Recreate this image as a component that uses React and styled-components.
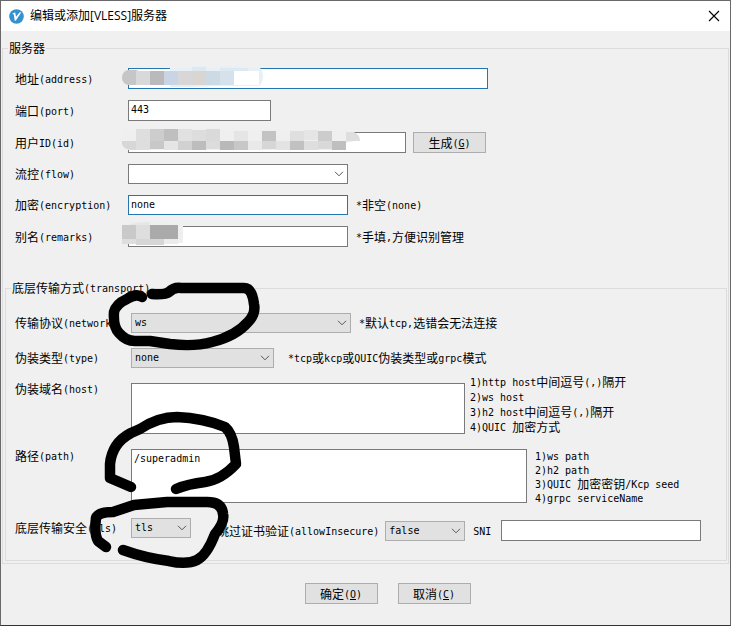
import React from "react";
import styled, { createGlobalStyle } from "styled-components";

const GlobalStyle = createGlobalStyle`
  *, *::before, *::after { box-sizing: border-box; }
  body { margin: 0; background: #f0f0f0; }
`;

const CJK = `"Noto Sans CJK SC", sans-serif`;
const MONO = `"DejaVu Sans Mono", "Noto Sans CJK SC", monospace`;

const Window = styled.main`
  position: relative;
  display: flex;
  flex-direction: column;
  min-height: 100vh;
  border: 1px solid #6a686a;
  border-bottom-color: #333;
  background: #f0f0f0;
  color: #000;
  font: 12px/14px ${CJK};
`;

const TitleBar = styled.header`
  display: flex;
  align-items: center;
  gap: 6px;
  height: 30px;
  padding: 0 8px;
  background: #fff;
`;

const Title = styled.h1`
  flex: 1;
  margin: 0;
  font: 12px/16px "Open Sans", ${CJK};
`;

const CloseButton = styled.button`
  display: flex;
  padding: 2px;
  border: 0;
  background: none;
`;

const Group = styled.fieldset`
  min-width: 0;
  margin: 9px 1px 0;
  padding: 12px 0 2px;
  border: 1px solid #dcdcdc;
`;

const TransportGroup = styled(Group)`
  margin: 33px 1px 0 2px;
  padding: 17px 25px 19px 9px;
`;

const Legend = styled.legend`
  margin-left: 5px;
  padding: 0 1px;
  line-height: 16px;
`;

const TransportLegend = styled(Legend)`
  margin-left: -4px;
`;

const Rows = styled.div`
  display: grid;
  gap: 11px;
  padding-left: 12px;
`;

const Row = styled.div`
  display: flex;
  align-items: ${(p) => p.$align || "center"};
  margin-top: ${(p) => p.$before || 0}px;
`;

const Label = styled.label`
  flex: none;
  width: ${(p) => (p.$wide ? 116 : 113)}px;
  padding-top: ${(p) => p.$drop || 0}px;
  white-space: nowrap;
`;

const InlineLabel = styled.label`
  flex: none;
  white-space: nowrap;
`;

const Latin = styled.span`
  font-family: ${MONO};
  font-size: 10px;
  line-height: 0;
  vertical-align: 1px;
  white-space: pre;
`;

const TextBox = styled.input`
  flex: ${(p) => (p.$width ? `0 1 ${p.$width}px` : "1")};
  min-width: 0;
  height: ${(p) => (p.$short ? 20 : 21)}px;
  padding: 0 2px 2px;
  border: 1px solid ${(p) => (p.$accent ? "#2475b0" : "#7a7a7a")};
  border-radius: 0;
  outline: 0;
  background: #fff;
  color: #000;
  font: 10px/14px ${MONO};
`;

const TextArea = styled.textarea`
  flex: 1;
  min-width: 0;
  height: ${(p) => p.$height}px;
  margin-top: ${(p) => p.$drop || 0}px;
  padding: 2px;
  border: 1px solid #7a7a7a;
  border-radius: 0;
  outline: 0;
  resize: none;
  background: #fff;
  color: #000;
  font: 10px/14px ${MONO};
`;

const SelectFrame = styled.span`
  display: grid;
  flex: 0 1 ${(p) => p.$width}px;
  align-items: center;
  height: 20px;
  > * { grid-area: 1 / 1; }
  > svg { justify-self: end; margin-right: 4px; pointer-events: none; }
`;

const SelectInput = styled.select`
  appearance: none;
  width: 100%;
  height: 20px;
  padding: 0 20px 0 3px;
  border: 1px solid ${(p) => (p.$light ? "#7a7a7a" : "#adadad")};
  border-radius: 0;
  outline: 0;
  background: ${(p) => (p.$light ? "#fff" : "#e1e1e1")};
  color: #000;
  font: 10px/14px ${MONO};
`;

const Hint = styled.span`
  margin-left: ${(p) => p.$gap || 8}px;
  white-space: nowrap;
`;

const Notes = styled.ol`
  flex: none;
  width: ${(p) => p.$width}px;
  margin: 0;
  padding: 0 0 0 ${(p) => p.$gap}px;
  list-style: none;
  line-height: ${(p) => p.$line}px;
  white-space: nowrap;
`;

const SecurityOptions = styled.div`
  display: flex;
  flex: 1;
  align-items: center;
  min-width: 0;
  margin-left: 26px;
  padding-top: 2px;
`;

const InsecureLabel = styled(InlineLabel)`
  margin-right: 6px;
`;

const SniLabel = styled(InlineLabel)`
  margin: 0 10px 0 8px;
`;

const PushButton = styled.button`
  width: 73px;
  height: 21px;
  padding: 0;
  border: 1px solid #adadad;
  border-radius: 0;
  background: #e1e1e1;
  color: #000;
  font: 12px/14px ${CJK};
`;

const GenerateButton = styled(PushButton)`
  margin-left: 7px;
`;

const Footer = styled.footer`
  display: flex;
  justify-content: center;
  gap: 20px;
  padding: 19px 0 20px 44px;
`;

const Markup = styled.svg`
  position: absolute;
  top: -1px;
  left: -1px;
  pointer-events: none;
`;

/* Half-width characters take six pixels, full-width characters twelve. */
function Text({ children }) {
  return children
    .split(/([\x20-\x7e]+)/)
    .filter(Boolean)
    .map((run, i) =>
      /^[\x20-\x7e]/.test(run) ? <Latin key={i}>{run}</Latin> : run
    );
}

function Select({ id, width, value, light }) {
  return (
    <SelectFrame $width={width}>
      <SelectInput id={id} defaultValue={value} $light={light}>
        <option value={value}>{value}</option>
      </SelectInput>
      <svg width="10" height="6" viewBox="0 0 10 6" fill="none" stroke="#555">
        <path d="M1 .8 5 4.8 9 .8" />
      </svg>
    </SelectFrame>
  );
}

function AccessKey({ text, letter }) {
  return (
    <>
      {text}
      <Latin>
        (<u>{letter}</u>)
      </Latin>
    </>
  );
}

const addressCells = ["#d9d9d9", "#bababa", "#c9d5e4", "#d8d6d7", "#d9d5d2", "#cbdae5", "#d6e2eb", "#ffffff"];
const idTop = [null, "#dedede", "#cdcdcd", "#bfbfbf", "#e1e1e1", "#dddddd", "#dadada", "#efefef", "#e5e5e5", "#efefef", "#c3c3c3", "#efefef", "#dfdfdf", "#e5e5e5", "#cccccc", "#efefef"];
const idBottom = ["#dedede", "#c8c8c8", "#e5e5e5", "#d1d1d1", "#bdbdbd", "#dcdcdc", "#b9b9b9", "#c7c7c7", "#e9e9e9", "#d6d6d6", "#e3e3e3", "#c1c1c1", "#dedede", "#d9d9d9", "#bfbfbf"];

function Scribbles() {
  return (
    <Markup width="731" height="626" viewBox="0 0 731 626" aria-hidden="true">
      <defs>
        <clipPath id="addressClip">
          <rect x="122" y="66" width="141" height="21" rx="7" />
        </clipPath>
      </defs>
      <path fill="#efefef" d="M122 70h16v15h-16z" />
      <path fill="#e9f0f5" d="M170 68h22v-2h14v2h14v-2h21v2h19q3 3 3 9t-4 9h-42l-25 1h-22z" />
      <g clipPath="url(#addressClip)">
        <rect x="122" y="70" width="20" height="15" rx="7" fill="#c6c6c6" />
        {addressCells.map((c, i) => (
          <rect key={i} x={136 + i * 14} y="71" width={i === 7 ? 25 : 14} height="14" fill={c} />
        ))}
        <path fill="#dce9f1" d="M192 67h14v4h-14zM220 68h28v3h-28z" />
      </g>
      <path fill="#efefef" d="M122 130h225q10 2 13 10l-14 3v7H128v-10h-6z" />
      {idTop.map((c, i) => c && <rect key={i} x={122 + i * 14} y={i > 3 && i % 2 ? 130 : 129 + (i > 7 ? 2 : 0)} width="14" height={i > 7 ? 10 : 12} fill={c} />)}
      {idBottom.map((c, i) => <rect key={i} x={136 + i * 14} y="141" width="14" height={i % 4 === 1 ? 8 : 9} fill={c} />)}
      <path fill="#d7d7d7" d="M122 141h14v9h-5q-8-1-9-6z" />
      <path fill="#dedede" d="M346 132h8q6 3 6 9h-14z" />
      <path fill="#efefef" d="M122 224q6-3 15-3h20l14 3h12v19h-53v-3h-8z" />
      <path fill="#e5e6e6" d="M122 225h6q7-3 22-3v22h-28z" />
      <path fill="#c9c9c9" d="M122 225h14v14h-14z" />
      <path fill="#dedede" d="M136 225h14v14h-14zM122 239h14v5h-14z" />
      <path fill="#aaaaaa" d="M150 225h28v14h-28z" />
      <path fill="#d6d6d6" d="M136 239h28v6h-28z" />
      <path fill="#ececec" d="M164 239h14v5h-14z" />
      <g fill="none" stroke="#000" strokeWidth="10.5" strokeLinecap="round" strokeLinejoin="round">
        <path d="M142 297Q136 293 127 299 116 304 114 312 113 327 119 333 126 341 135 341L150 341 170 344Q194 347 212 342 236 336 248 322 256 314 254 304 252 288 244 288L215 288 181 288Q174 287 169 292 165 295 152 294" />
        <path d="M131 487 110 478V464Q112 443 131 433L140 429Q158 417 177 417 203 418 225 427 232 433 234 447L236 464Q221 480 205 482 188 484 176 489" />
        <path d="M106 547 98 541Q94 534 96 518 98 512 113 512L134 505 167 502H207Q222 502 223 514 225 522 215 534 207 555 197 560 187 565 169 561 145 558 123 550" />
      </g>
    </Markup>
  );
}

export default function App() {
  return (
    <>
      <GlobalStyle />
      <Window>
        <TitleBar>
          <svg width="15" height="15" viewBox="0 0 15 15" aria-hidden="true">
            <circle cx="7.5" cy="7.5" r="7.3" fill="#3592d0" />
            <path d="M3.2 4.4 6.2 3.6 7 7.7 10.8 3.2 12.2 3.5 6.7 11.7 5.7 11.4 4.8 5.4Z" fill="#fff" />
          </svg>
          <Title>编辑或添加[VLESS]服务器</Title>
          <CloseButton type="button" aria-label="关闭">
            <svg width="12" height="12" viewBox="0 0 12 12" stroke="#000" strokeWidth="1.1">
              <path d="M1 1 11 11M11 1 1 11" />
            </svg>
          </CloseButton>
        </TitleBar>

        <Group>
          <Legend>服务器</Legend>
          <Rows>
            <Row>
              <Label htmlFor="address"><Text>地址(address)</Text></Label>
              <TextBox id="address" $width={360} $accent />
            </Row>
            <Row>
              <Label htmlFor="port"><Text>端口(port)</Text></Label>
              <TextBox id="port" $width={143} defaultValue="443" />
            </Row>
            <Row>
              <Label htmlFor="userId"><Text>用户ID(id)</Text></Label>
              <TextBox id="userId" $width={278} />
              <GenerateButton type="button"><AccessKey text="生成" letter="G" /></GenerateButton>
            </Row>
            <Row>
              <Label htmlFor="flow"><Text>流控(flow)</Text></Label>
              <Select id="flow" width={220} value="" light />
            </Row>
            <Row>
              <Label htmlFor="encryption"><Text>加密(encryption)</Text></Label>
              <TextBox id="encryption" $width={220} $accent $short defaultValue="none" />
              <Hint><Text>*非空(none)</Text></Hint>
            </Row>
            <Row>
              <Label htmlFor="remarks"><Text>别名(remarks)</Text></Label>
              <TextBox id="remarks" $width={220} />
              <Hint><Text>*手填,方便识别管理</Text></Hint>
            </Row>
          </Rows>

          <TransportGroup>
            <TransportLegend><Text>底层传输方式(transport)</Text></TransportLegend>
            <Row>
              <Label $wide htmlFor="network"><Text>传输协议(network)</Text></Label>
              <Select id="network" width={220} value="ws" />
              <Hint><Text>*默认tcp,选错会无法连接</Text></Hint>
            </Row>
            <Row $before={15}>
              <Label $wide htmlFor="type"><Text>伪装类型(type)</Text></Label>
              <Select id="type" width={143} value="none" />
              <Hint $gap={14}><Text>*tcp或kcp或QUIC伪装类型或grpc模式</Text></Hint>
            </Row>
            <Row $before={6} $align="flex-start">
              <Label $wide $drop={8} htmlFor="host"><Text>伪装域名(host)</Text></Label>
              <TextArea id="host" $height={51} $drop={9} />
              <Notes $width={236} $gap={5} $line={15}>
                <li><Text>1)http host中间逗号(,)隔开</Text></li>
                <li><Text>2)ws host</Text></li>
                <li><Text>3)h2 host中间逗号(,)隔开</Text></li>
                <li><Text>4)QUIC 加密方式</Text></li>
              </Notes>
            </Row>
            <Row $before={15} $align="flex-start">
              <Label $wide htmlFor="path"><Text>路径(path)</Text></Label>
              <TextArea id="path" $height={54} defaultValue="/superadmin" />
              <Notes $width={174} $gap={8} $line={14}>
                <li><Text>1)ws path</Text></li>
                <li><Text>2)h2 path</Text></li>
                <li><Text>3)QUIC 加密密钥/Kcp seed</Text></li>
                <li><Text>4)grpc serviceName</Text></li>
              </Notes>
            </Row>
            <Row $before={13} $align="flex-start">
              <Label $wide $drop={3} htmlFor="tls"><Text>底层传输安全(tls)</Text></Label>
              <Select id="tls" width={60} value="tls" />
              <SecurityOptions>
                <InsecureLabel htmlFor="allowInsecure"><Text>跳过证书验证(allowInsecure)</Text></InsecureLabel>
                <Select id="allowInsecure" width={80} value="false" />
                <SniLabel htmlFor="sni"><Text>SNI</Text></SniLabel>
                <TextBox id="sni" />
              </SecurityOptions>
            </Row>
          </TransportGroup>
        </Group>

        <Footer>
          <PushButton type="button"><AccessKey text="确定" letter="O" /></PushButton>
          <PushButton type="button"><AccessKey text="取消" letter="C" /></PushButton>
        </Footer>

        <Scribbles />
      </Window>
    </>
  );
}
